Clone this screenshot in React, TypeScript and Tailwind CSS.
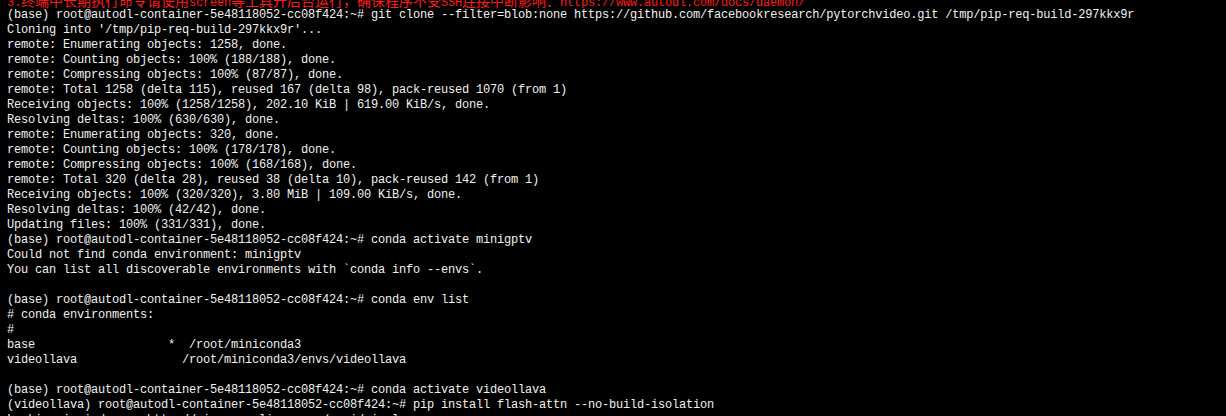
const cjk = "font-['Noto_Sans_CJK_SC',sans-serif] text-[14px] tracking-normal";

const lines: string[] = [
  "(base) root@autodl-container-5e48118052-cc08f424:~# git clone --filter=blob:none https://github.com/facebookresearch/pytorchvideo.git /tmp/pip-req-build-297kkx9r",
  "Cloning into '/tmp/pip-req-build-297kkx9r'...",
  "remote: Enumerating objects: 1258, done.",
  "remote: Counting objects: 100% (188/188), done.",
  "remote: Compressing objects: 100% (87/87), done.",
  "remote: Total 1258 (delta 115), reused 167 (delta 98), pack-reused 1070 (from 1)",
  "Receiving objects: 100% (1258/1258), 202.10 KiB | 619.00 KiB/s, done.",
  "Resolving deltas: 100% (630/630), done.",
  "remote: Enumerating objects: 320, done.",
  "remote: Counting objects: 100% (178/178), done.",
  "remote: Compressing objects: 100% (168/168), done.",
  "remote: Total 320 (delta 28), reused 38 (delta 10), pack-reused 142 (from 1)",
  "Receiving objects: 100% (320/320), 3.80 MiB | 109.00 KiB/s, done.",
  "Resolving deltas: 100% (42/42), done.",
  "Updating files: 100% (331/331), done.",
  "(base) root@autodl-container-5e48118052-cc08f424:~# conda activate minigptv",
  "Could not find conda environment: minigptv",
  "You can list all discoverable environments with `conda info --envs`.",
  "",
  "(base) root@autodl-container-5e48118052-cc08f424:~# conda env list",
  "# conda environments:",
  "#",
  "base                   *  /root/miniconda3",
  "videollava               /root/miniconda3/envs/videollava",
  "",
  "(base) root@autodl-container-5e48118052-cc08f424:~# conda activate videollava",
  "(videollava) root@autodl-container-5e48118052-cc08f424:~# pip install flash-attn --no-build-isolation",
  "Looking in indexes: http://mirrors.aliyun.com/pypi/simple",
];

export default function App() {
  return (
    <div className="w-[1226px] h-[416px] overflow-hidden bg-black">
      <div className="-mt-[7px] pl-[7px] font-['Liberation_Mono',monospace] text-[12px] leading-[15px] tracking-[-0.2px] text-[#f0f0f0] whitespace-pre">
        {/* notice line, mostly scrolled off */}
        <div className="h-[15px] text-[#ff1a1a] overflow-hidden">
          3.<span className={cjk}>终端中长期执行命令请使用</span>screen
          <span className={cjk}>等工具开后台运行，确保程序不受</span>SSH
          <span className={cjk}>连接中断影响：</span>https://www.autodl.com/docs/daemon/
        </div>
        {lines.map((line, i) => (
          <div key={i} className="h-[15px]">
            {line}
          </div>
        ))}
      </div>
    </div>
  );
}
